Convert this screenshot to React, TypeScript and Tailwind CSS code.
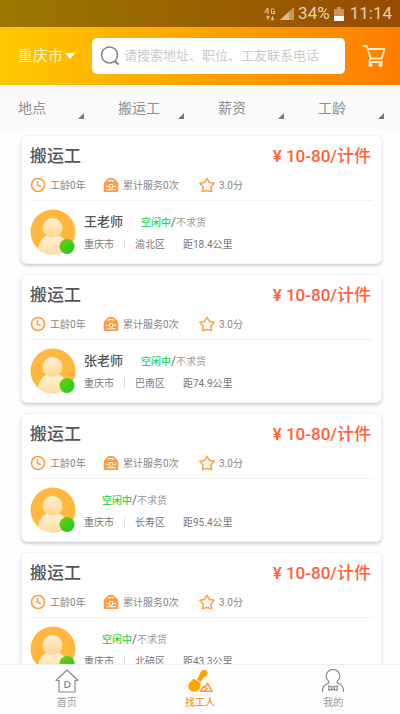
import { useState } from "react";

type Worker = {
  id: number;
  job: string;
  price: string;
  years: number;
  services: number;
  score: string;
  name: string;
  city: string;
  district: string;
  distance: string;
};

const workers: Worker[] = [
  { id: 1, job: "搬运工", price: "10-80/计件", years: 0, services: 0, score: "3.0", name: "王老师", city: "重庆市", district: "渝北区", distance: "18.4" },
  { id: 2, job: "搬运工", price: "10-80/计件", years: 0, services: 0, score: "3.0", name: "张老师", city: "重庆市", district: "巴南区", distance: "74.9" },
  { id: 3, job: "搬运工", price: "10-80/计件", years: 0, services: 0, score: "3.0", name: "", city: "重庆市", district: "长寿区", distance: "95.4" },
  { id: 4, job: "搬运工", price: "10-80/计件", years: 0, services: 0, score: "3.0", name: "", city: "重庆市", district: "北碚区", distance: "43.3" },
];

const filters = ["地点", "搬运工", "薪资", "工龄"];

const tabs = [
  { key: "home", label: "首页", Icon: HomeIcon },
  { key: "workers", label: "找工人", Icon: ShovelIcon },
  { key: "mine", label: "我的", Icon: UserIcon },
];

function StatusBar() {
  return (
    <div className="flex h-[27px] items-center justify-end bg-black/40 pr-2 text-[#e3d2b8]">
      <svg viewBox="0 0 12 14" className="mr-1 h-3.5 w-3" fill="none" stroke="currentColor" strokeWidth="1.2" opacity="0.8">
        <path d="M3.5 1 1 5h4M4 1v6M10.500 2H7.500v4.500h3V4.500H9" />
        <path d="M4 13V9M2.500 10.500 4 9l1.500 1.500M8.500 9v4M7 11.500 8.500 13l1.500-1.500" />
      </svg>
      <svg viewBox="0 0 14 13" className="mr-1 h-[13px] w-3.5">
        <path d="M0 13 14 0v13z" fill="currentColor" opacity="0.55" />
        <path d="M0 13 9 4.600V13z" fill="currentColor" opacity="0.6" />
      </svg>
      <span className="text-[17px]">34%</span>
      <svg viewBox="0 0 10 14" className="mx-1 h-3.5 w-2.5">
        <path d="M3 0h4v2h3v12H0V2h3z" fill="currentColor" opacity="0.55" />
        <path d="M0 9h10v5H0z" fill="#fff" />
      </svg>
      <span className="ml-0.5 text-[17px]">11:14</span>
    </div>
  );
}

function SearchIcon() {
  return (
    <svg viewBox="0 0 20 20" className="size-5 shrink-0" fill="none" stroke="#858585" strokeWidth="1.5">
      <circle cx="9.500" cy="9" r="8" />
      <path d="m15.500 15.500 2.500 2.500" strokeWidth="2" strokeLinecap="round" />
    </svg>
  );
}

function CartIcon() {
  return (
    <svg viewBox="0 0 24 24" className="size-6" fill="none" stroke="#ffe8cf" strokeWidth="1.800" strokeLinecap="round" strokeLinejoin="round">
      <path d="M1.500 2h3l4.300 12.500h11L22.500 5H5.500" />
      <path d="m8.500 14.500-1.500 3.500h13" />
      <circle cx="8.500" cy="21" r="1.200" fill="#ffe8cf" />
      <circle cx="18.500" cy="21" r="1.200" fill="#ffe8cf" />
    </svg>
  );
}

function ClockIcon() {
  return (
    <svg viewBox="0 0 16 16" className="size-4" fill="none" stroke="#ff9c45" strokeWidth="1.600">
      <circle cx="8" cy="8" r="6.500" />
      <path d="M7.500 4v4.500l3.500 1" />
    </svg>
  );
}

function ToolboxIcon() {
  return (
    <svg viewBox="0 0 16 16" className="size-4" fill="#ff9c45">
      <path d="M3 3.500Q4.500.800 8 .800t5 2.700q2.300 1.500 2.300 4V14q0 1-1 1H1.700q-1 0-1-1V7.500q0-2.500 2.300-4z" />
      <path d="M5.800 5V3.500h4.400V5M3 9.300h3M10 9.300h3M6.500 7.500h3V11h-3zM3.500 12.700h9" fill="none" stroke="#fff" strokeWidth="1" />
    </svg>
  );
}

function StarIcon() {
  return (
    <svg viewBox="0 0 16 16" className="size-4" fill="none" stroke="#ffa347" strokeWidth="1.600" strokeLinejoin="round">
      <path d="m8 1.300 2.300 4.100 4.800.9-3.200 3.700.6 4.600L8 13.400l-4.500 1.200.6-4.600L.9 6.300l4.800-.9z" />
    </svg>
  );
}

function Avatar() {
  return (
    <svg viewBox="0 0 46 46" className="size-[46px] shrink-0">
      <defs>
        <linearGradient id="person" x1="0" y1="0" x2="0" y2="1">
          <stop offset="0" stopColor="#fff1d8" />
          <stop offset="1" stopColor="#ffdda0" />
        </linearGradient>
        <linearGradient id="head" x1="0" y1="0" x2="0" y2="1">
          <stop offset="0" stopColor="#fff1d8" />
          <stop offset="1" stopColor="#ffd58c" />
        </linearGradient>
        <linearGradient id="online" x1="0" y1="0" x2="1" y2="1">
          <stop offset="0" stopColor="#7ccb0c" />
          <stop offset="1" stopColor="#10cb2c" />
        </linearGradient>
        <clipPath id="round">
          <circle cx="23" cy="23" r="22.500" />
        </clipPath>
      </defs>
      <circle cx="23" cy="23" r="22.500" fill="#ffb83d" />
      <path clipPath="url(#round)" d="M7.500 46C7.500 34 12 27.500 18 26.500h10c6 1 10.500 7.500 10.500 19.500z" fill="url(#person)" />
      <circle cx="22.500" cy="19" r="10" fill="url(#head)" />
      <circle cx="37" cy="37.500" r="7.500" fill="url(#online)" />
    </svg>
  );
}

function HomeIcon() {
  return (
    <svg viewBox="0 0 24 24" className="size-6" fill="none" stroke="#8a8a8a" strokeWidth="1.200" strokeLinejoin="round">
      <path d="M4 11.500H1L12 1l11 10.500h-3V23H4z" />
      <path d="M10 12.500h2a3 3 0 0 1 0 6h-2z" />
    </svg>
  );
}

function ShovelIcon() {
  return (
    <svg viewBox="0 0 26 24" className="h-6 w-[26px]" fill="#ffa500">
      <path d="M12.500 6q1-4.500 4-5.300 3.500-.2 4.300 3Q20.500 6.500 17 8l-3.500 5-3.500-2.500z" />
      <path d="M4.500 11.500q1-2 3-1.500l6 4q.5 2.500-.5 5-1.500 3.500-5.500 3.800-4.500 0-6-3.800-.8-3 .8-5 1-.8 2.200-2.500z" />
      <path d="m13.500 22.300 3-5 1.500 1 2.500-4 4.700 8zM17.500 22q.8-3 3.500-2.200" fill="none" stroke="#ff9340" strokeWidth="1.400" strokeLinejoin="round" />
    </svg>
  );
}

function UserIcon() {
  return (
    <svg viewBox="0 0 26 26" className="h-6 w-[26px]" fill="none" stroke="#8a8a8a" strokeWidth="1.300">
      <path d="M1.500 25q0-6.500 4-8.500l3-1.500v-1.500Q5.500 11 5.500 8a7.500 7.500 0 0 1 15 0q0 3-3 5.500V15l3 1.500q4 2 4 8.500" />
      <path d="m8.500 18.500 4.500 1 4.500-1v4.500l-4.500-1-4.500 1zM11.500 19v3.500M14.500 19v3.500" />
    </svg>
  );
}

function WorkerCard({ worker }: { worker: Worker }) {
  return (
    <li className="shrink-0 rounded-md border border-[#f2f2f2] bg-white px-2 pb-2 pt-2 shadow-[0_2px_3px_rgba(0,0,0,0.18)]">
      <div className="flex h-[26px] items-center justify-between pr-0.5">
        <h2 className="text-[17px] font-medium text-[#555]">{worker.job}</h2>
        <p className="text-[17px] font-medium text-[#ff6037]">¥ {worker.price}</p>
      </div>

      <div className="flex h-[31px] items-center border-b border-[#f1f1f1] text-[10px] text-[#858585]">
        <span className="flex w-[73px] items-center gap-1">
          <ClockIcon />
          工龄{worker.years}年
        </span>
        <span className="flex w-24 items-center gap-1">
          <ToolboxIcon />
          累计服务{worker.services}次
        </span>
        <span className="flex items-center gap-1">
          <StarIcon />
          {worker.score}分
        </span>
      </div>

      <div className="flex items-center gap-2 pt-2">
        <Avatar />
        <div className="flex flex-col gap-1">
          <div className="flex h-5 items-center gap-[18px]">
            <span className="text-[13px] font-medium text-[#555]">{worker.name}</span>
            <span className="text-[10px] text-[#999]">
              <span className="font-medium text-[#2fd351]">空闲中</span>
              <span className="text-xs text-[#666]">/</span>
              不求货
            </span>
          </div>
          <div className="flex h-4 items-center text-[10px] text-[#777]">
            <span>{worker.city}</span>
            <span className="mx-2.5 h-2.5 w-px bg-[#ddd]" />
            <span>{worker.district}</span>
            <span className="ml-[18px]">距{worker.distance}公里</span>
          </div>
        </div>
      </div>
    </li>
  );
}

export default function App() {
  const [keyword, setKeyword] = useState("");
  const [activeTab, setActiveTab] = useState("workers");

  return (
    <main className="flex h-screen flex-col overflow-hidden bg-[#fdfdfd] font-[Roboto,'Noto_Sans_CJK_SC',sans-serif]">
      <header className="bg-linear-to-r from-[#ffc800] to-[#ff7d00]">
        <StatusBar />
        <div className="flex h-[58px] items-center pl-[18px] pr-3.5">
          <button type="button" className="flex items-center gap-0.5 text-[15px] text-[#fff3c9]">
            重庆市
            <svg viewBox="0 0 10 6" className="h-1.5 w-2.5">
              <path d="M0 0h10L5 6z" fill="#fff" />
            </svg>
          </button>
          <label className="ml-[17px] mr-[17px] flex h-9 min-w-0 flex-1 items-center gap-1 rounded-[5px] bg-white px-2">
            <SearchIcon />
            <input
              type="text"
              aria-label="搜索"
              value={keyword}
              onChange={(event) => setKeyword(event.target.value)}
              placeholder="请搜索地址、职位、工友联系电话"
              className="min-w-0 flex-1 text-[13px] text-gray-700 outline-none placeholder:text-[#c9c9c9]"
            />
          </label>
          <button type="button" aria-label="购物车">
            <CartIcon />
          </button>
        </div>
      </header>

      <div className="grid h-[45px] shrink-0 grid-cols-4 bg-[#fafafa]">
        {filters.map((filter) => (
          <button key={filter} type="button" className="flex items-center justify-between pl-[18px] pr-4 text-sm text-[#8f8f8f]">
            {filter}
            <svg viewBox="0 0 6 6" className="mt-4 size-1.5">
              <path d="M6 0v6H0z" fill="#777" />
            </svg>
          </button>
        ))}
      </div>

      <ul className="flex min-h-0 flex-1 flex-col gap-2.5 overflow-hidden pl-[21px] pr-[18px] pt-[5px]">
        {workers.map((worker) => (
          <WorkerCard key={worker.id} worker={worker} />
        ))}
      </ul>

      <nav className="grid h-[50px] shrink-0 grid-cols-3 border-t border-[#eee] bg-[#fdfdfd]">
        {tabs.map(({ key, label, Icon }) => (
          <button
            key={key}
            type="button"
            onClick={() => setActiveTab(key)}
            className={`flex flex-col items-center pt-1 text-[10px] leading-5 ${activeTab === key ? "font-medium text-[#ff9233]" : "text-[#999]"}`}
          >
            <Icon />
            {label}
          </button>
        ))}
      </nav>
    </main>
  );
}
